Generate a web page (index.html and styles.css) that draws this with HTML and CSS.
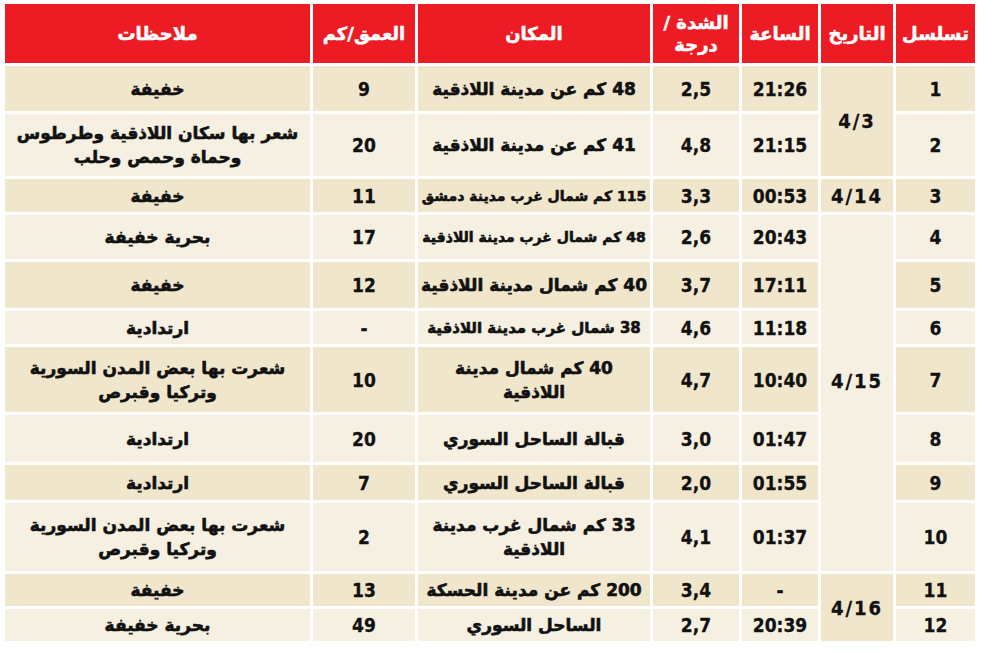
FILE: index.html
```html
<!DOCTYPE html>
<html lang="ar" dir="rtl">
<head>
<meta charset="utf-8">
<title>هزات أرضية</title>
<link rel="stylesheet" href="styles.css">
</head>
<body>
<div class="quakes">
  <div class="hd">تسلسل</div>
  <div class="hd">التاريخ</div>
  <div class="hd">الساعة</div>
  <div class="hd">الشدة /<br>درجة</div>
  <div class="hd">المكان</div>
  <div class="hd">العمق/كم</div>
  <div class="hd">ملاحظات</div>

  <div class="c d num">1</div>
  <div class="c d date span2">4/3</div>
  <div class="c d num">21:26</div>
  <div class="c d num">2,5</div>
  <div class="c d">48 كم عن مدينة اللاذقية</div>
  <div class="c d num">9</div>
  <div class="c d">خفيفة</div>

  <div class="c l num">2</div>
  <div class="c l num">21:15</div>
  <div class="c l num">4,8</div>
  <div class="c l">41 كم عن مدينة اللاذقية</div>
  <div class="c l num">20</div>
  <div class="c l">شعر بها سكان اللاذقية وطرطوس<br>وحماة وحمص وحلب</div>

  <div class="c d num">3</div>
  <div class="c d date">4/14</div>
  <div class="c d num">00:53</div>
  <div class="c d num">3,3</div>
  <div class="c d tighter">115 كم شمال غرب مدينة دمشق</div>
  <div class="c d num">11</div>
  <div class="c d">خفيفة</div>

  <div class="c l num">4</div>
  <div class="c l date span7">4/15</div>
  <div class="c l num">20:43</div>
  <div class="c l num">2,6</div>
  <div class="c l tighter">48 كم شمال غرب مدينة اللاذقية</div>
  <div class="c l num">17</div>
  <div class="c l">بحرية خفيفة</div>

  <div class="c d num">5</div>
  <div class="c d num">17:11</div>
  <div class="c d num">3,7</div>
  <div class="c d">40 كم شمال مدينة اللاذقية</div>
  <div class="c d num">12</div>
  <div class="c d">خفيفة</div>

  <div class="c l num">6</div>
  <div class="c l num">11:18</div>
  <div class="c l num">4,6</div>
  <div class="c l tight">38 شمال غرب مدينة اللاذقية</div>
  <div class="c l num">-</div>
  <div class="c l">ارتدادية</div>

  <div class="c d num">7</div>
  <div class="c d num">10:40</div>
  <div class="c d num">4,7</div>
  <div class="c d">40 كم شمال مدينة<br>اللاذقية</div>
  <div class="c d num">10</div>
  <div class="c d">شعرت بها بعض المدن السورية<br>وتركيا وقبرص</div>

  <div class="c l num">8</div>
  <div class="c l num">01:47</div>
  <div class="c l num">3,0</div>
  <div class="c l">قبالة الساحل السوري</div>
  <div class="c l num">20</div>
  <div class="c l">ارتدادية</div>

  <div class="c d num">9</div>
  <div class="c d num">01:55</div>
  <div class="c d num">2,0</div>
  <div class="c d">قبالة الساحل السوري</div>
  <div class="c d num">7</div>
  <div class="c d">ارتدادية</div>

  <div class="c l num">10</div>
  <div class="c l num">01:37</div>
  <div class="c l num">4,1</div>
  <div class="c l">33 كم شمال غرب مدينة<br>اللاذقية</div>
  <div class="c l num">2</div>
  <div class="c l">شعرت بها بعض المدن السورية<br>وتركيا وقبرص</div>

  <div class="c d num">11</div>
  <div class="c d date span2">4/16</div>
  <div class="c d num">-</div>
  <div class="c d num">3,4</div>
  <div class="c d">200 كم عن مدينة الحسكة</div>
  <div class="c d num">13</div>
  <div class="c d">خفيفة</div>

  <div class="c l num">12</div>
  <div class="c l num">20:39</div>
  <div class="c l num">2,7</div>
  <div class="c l">الساحل السوري</div>
  <div class="c l num">49</div>
  <div class="c l">بحرية خفيفة</div>
</div>
</body>
</html>
```

FILE: styles.css
```css
html, body {
  margin: 0;
  padding: 0;
  background: #ffffff;
}

body {
  padding: 4px 0 0 5px;
  font-family: "DejaVu Sans", sans-serif;
  font-weight: bold;
  color: #111111;
}

.quakes {
  direction: rtl;
  width: 970px;
  margin: 0 auto 0 0;
  display: grid;
  grid-template-columns: 79px 72px 76px 86px 232px 102px 305px;
  grid-template-rows: 59px 45px 62px 33px 44px 46px 33px 65px 47px 35px 68px 32px 32px;
  gap: 3px;
}

.hd {
  background: #ed1c24;
  color: #ffffff;
  font-size: 18px;
  display: flex;
  align-items: center;
  justify-content: center;
  text-align: center;
  line-height: 22px;
  -webkit-text-stroke: 0.5px #ffffff;
}

.c {
  display: flex;
  align-items: center;
  justify-content: center;
  text-align: center;
  font-size: 17px;
  line-height: 24px;
  -webkit-text-stroke: 0.6px #111111;
}

.d {
  background: #f0e6cc;
}

.l {
  background: #f5f0e1;
}

.num {
  font-family: "DejaVu Sans Condensed", "DejaVu Sans", sans-serif;
  font-size: 19px;
  direction: ltr;
  -webkit-text-stroke: 0.3px #111111;
}

.tight {
  font-size: 15px;
  white-space: nowrap;
}

.tighter {
  font-size: 14px;
  white-space: nowrap;
}

.date {
  font-family: "DejaVu Sans Condensed", "DejaVu Sans", sans-serif;
  font-size: 20px;
  direction: ltr;
  letter-spacing: 2px;
  -webkit-text-stroke: 0.3px #111111;
}

.span2 {
  grid-row: span 2;
}

.span7 {
  grid-row: span 7;
  padding-bottom: 24px;
}
```
